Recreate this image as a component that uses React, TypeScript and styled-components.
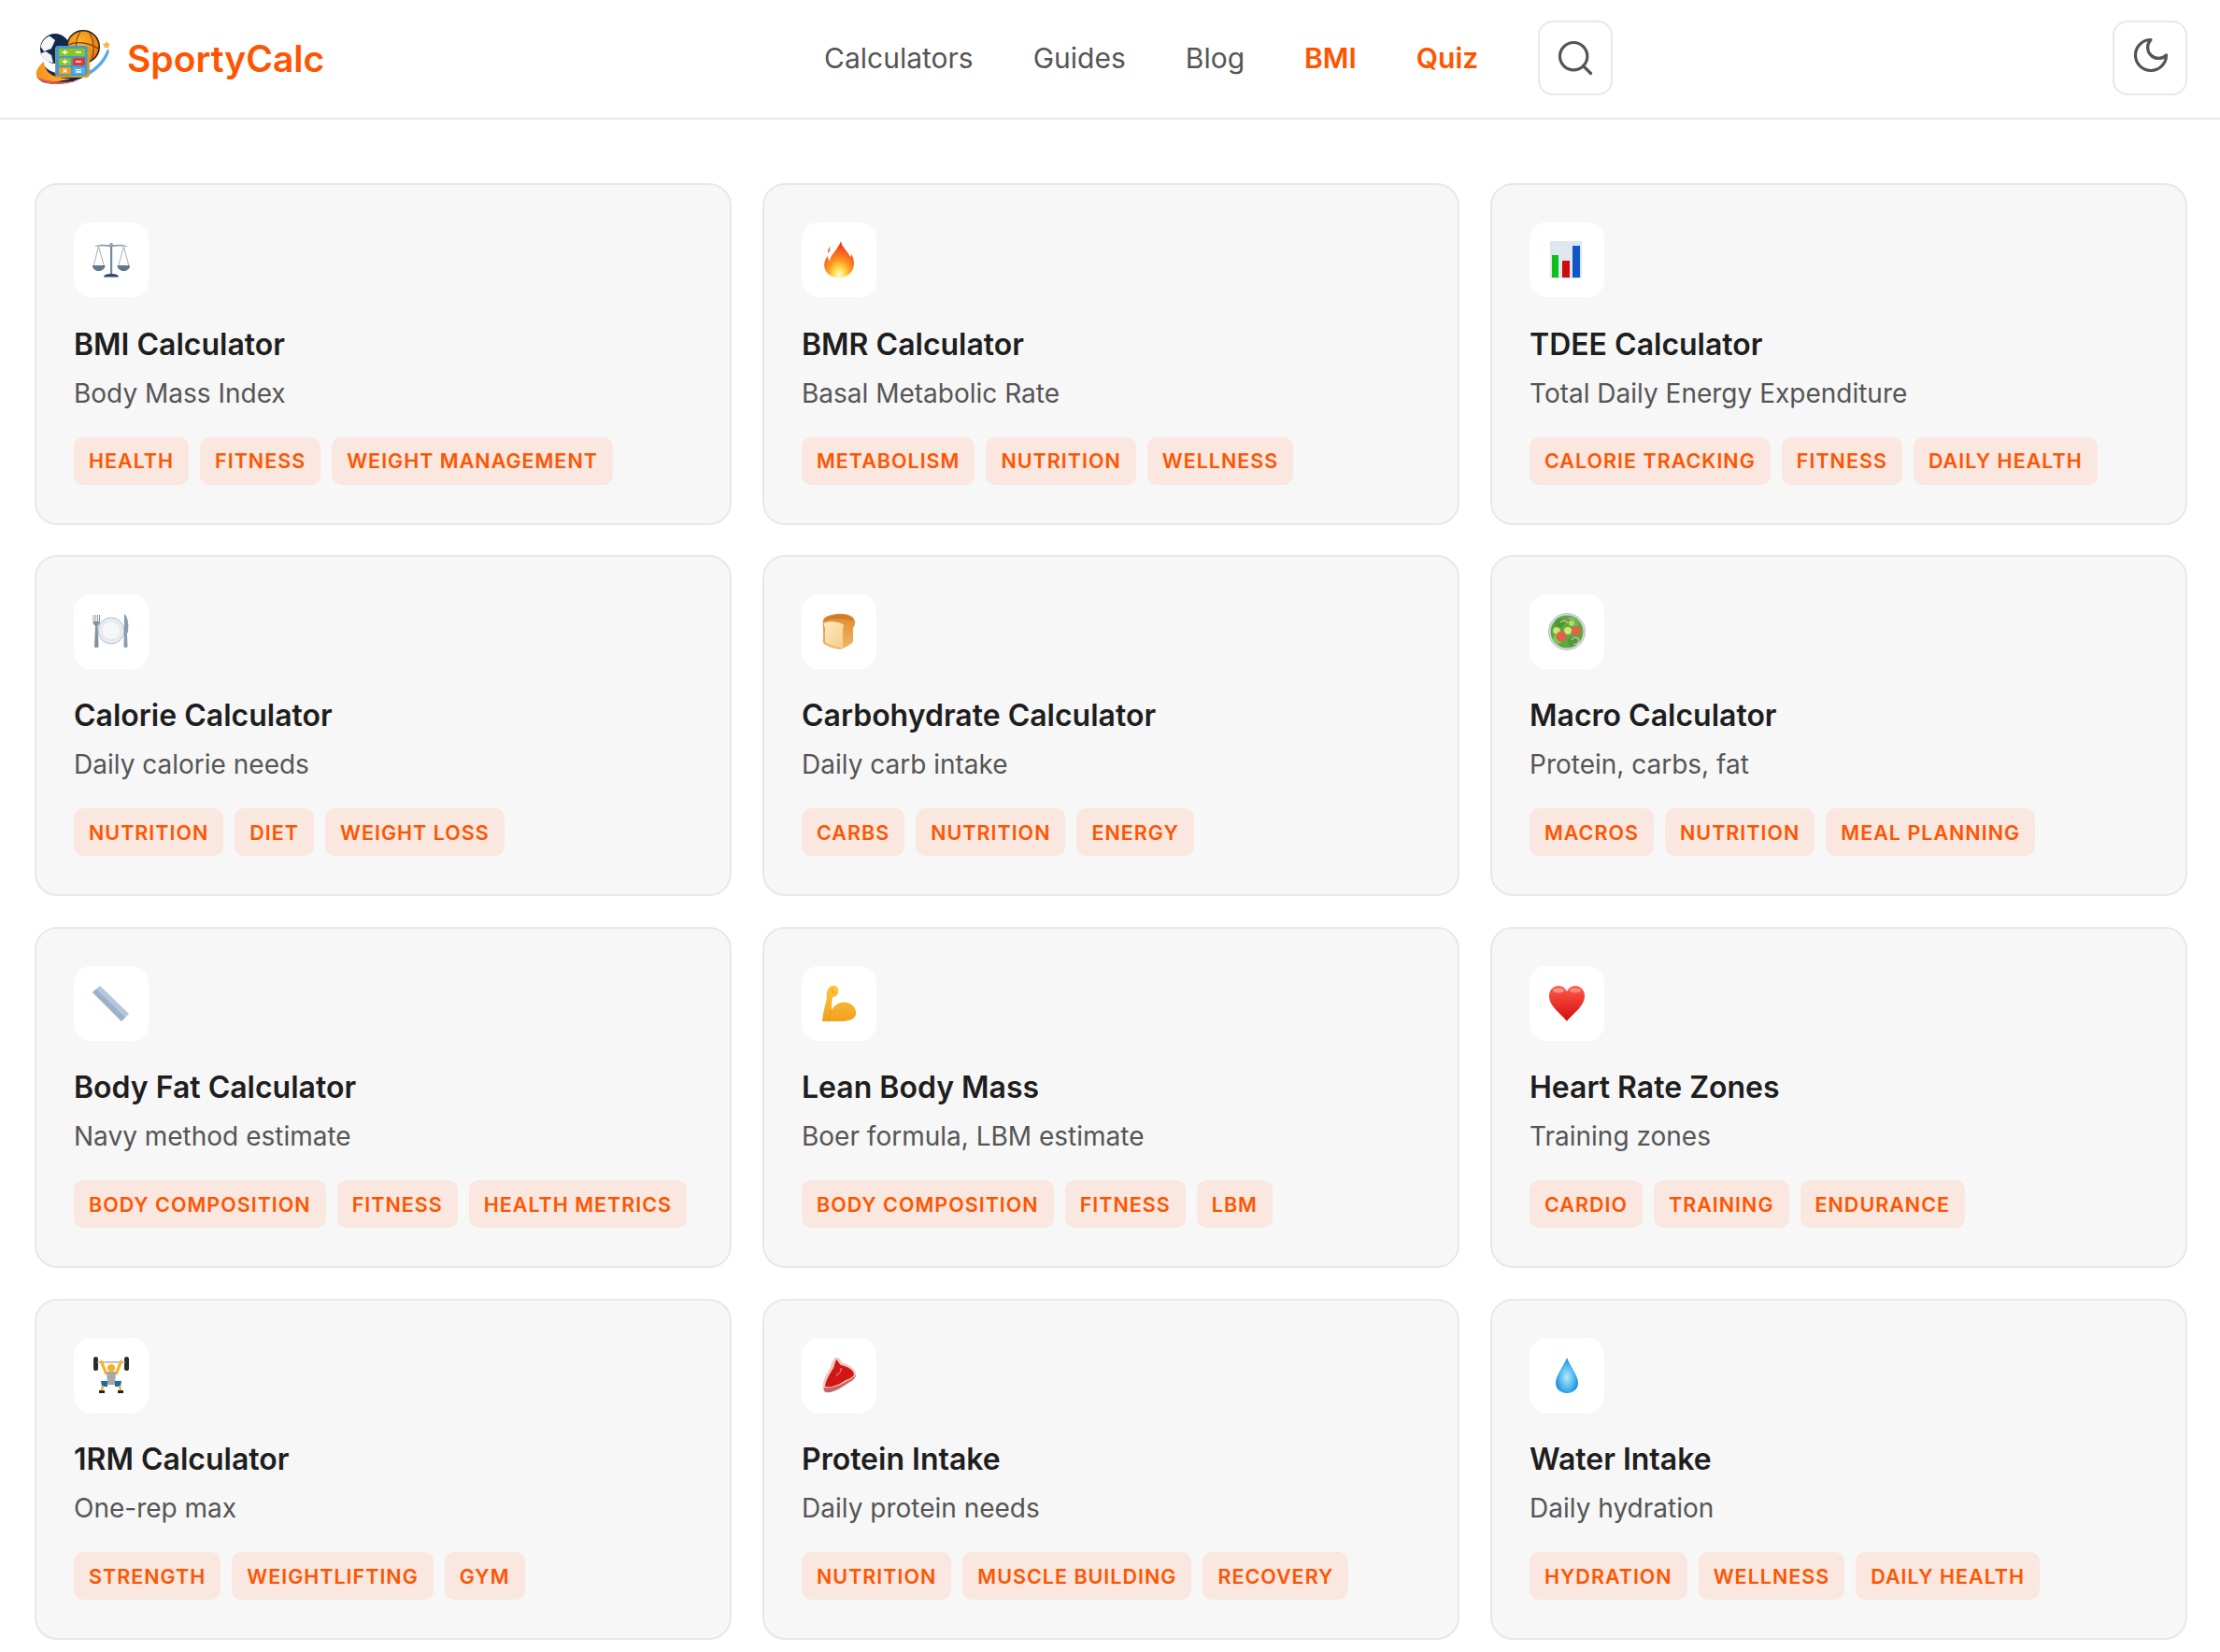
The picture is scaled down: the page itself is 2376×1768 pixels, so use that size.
import React from 'react'
import styled, { createGlobalStyle } from 'styled-components'
import { Search } from 'lucide-react'

const GlobalStyle = createGlobalStyle`
  * { box-sizing: border-box; }
  html, body { margin: 0; padding: 0; background: #fff; }
  body { font-family: Inter, "Noto Sans", sans-serif; color: #1e1e1e; }
`

const Logo = () => (
  <LogoSvg viewBox="0 0 80 60">
    <defs>
      <radialGradient id="ball" cx="40%" cy="35%" r="70%">
        <stop offset="0" stopColor="#ffb52e" />
        <stop offset="1" stopColor="#ea7a0c" />
      </radialGradient>
      <linearGradient id="swoosh" x1="0" y1="0" x2="1" y2="0">
        <stop offset="0" stopColor="#f7931e" />
        <stop offset="1" stopColor="#f9b233" />
      </linearGradient>
    </defs>
    <path d="M8 36 C0 44 -1 52 8 56 C24 61 54 56 70 36 C64 42 58 44 50 46 C34 50 14 48 8 36Z" fill="#14284a" />
    <path d="M9 34 C0 41 -2 50 5 54 C16 58 30 54 38 52 C26 52 10 50 9 34Z" fill="url(#swoosh)" />
    <path d="M1 50 C8 60 30 60 46 54 C30 57 12 56 1 50Z" fill="#e4574c" />
    <path d="M58 44 C68 37 74 29 77 20 L79 23 C76 33 68 42 58 48Z" fill="#5aa9e6" />
    <path d="M76 12 l1.400 2.400 2.600.6-1.800 2 .3 2.700-2.500-1.100-2.500 1.100.3-2.700-1.800-2 2.600-.6z" fill="#f6b23a" />
    <circle cx="21" cy="20" r="16" fill="#14284a" />
    <path d="M5.500 18 C7 12 11 8 15 6.500 L21 11 L17 20 L9 23Z" fill="#f5f6f8" />
    <path d="M6 25 L11 23 L17 27 L19 35 C12 35 7 31 6 25Z" fill="#eef1f3" />
    <circle cx="51" cy="18" r="18" fill="#1f1a17" />
    <circle cx="51" cy="18" r="16.500" fill="url(#ball)" />
    <path d="M35 16 C44 12 56 13 67 20 M48 2 C42 10 42 24 46 34 M58 3 C62 10 64 20 60 33" fill="none" stroke="#7a3a0a" strokeWidth="1.100" />
    <rect x="21" y="17" width="37" height="34" rx="4" fill="#d99a25" />
    <rect x="21.500" y="17" width="34" height="32" rx="3" fill="#3f9bd6" />
    <rect x="25" y="20" width="28" height="8" rx="1" fill="#8fc31f" />
    <rect x="25" y="30" width="13" height="8" rx="1" fill="#8fc31f" />
    <rect x="40" y="30" width="13" height="8" rx="1" fill="#e8342e" />
    <rect x="25" y="40" width="13" height="7.500" rx="1" fill="#f39c23" />
    <rect x="40" y="40" width="13" height="7.500" rx="1" fill="#57aee6" />
    <path d="M28.500 24h6M31.500 21.500v5M43 24h6M28.500 34h6M31.500 31.500v5M43 34h6M29.500 42l4 3.500M33.500 42l-4 3.500M43 42.600h6M43 45h6" stroke="#fff" strokeWidth="1.300" />
  </LogoSvg>
)

const Scale = () => (
  <svg viewBox="0 0 40 40">
    <path d="M19 2h2.200v33H19z" fill="#6f8aa3" />
    <path d="M3 5 C10 3 15 4 20 4 C25 4 30 3 37 5 L37 6 C30 5 25 6 20 6 C15 6 10 5 3 6Z" fill="#8c9db0" />
    <path d="M6.500 6 L1 27 M6.500 6 L12.500 27 M33.500 6 L27.500 27 M33.500 6 L39 27" stroke="#8d99a5" strokeWidth="0.800" fill="none" />
    <path d="M0 26 H13.500 C13.500 30 9.500 32 6.500 32 C3.500 32 0 30 0 26Z" fill="#63778c" />
    <path d="M26.500 26 H40 C40 30 36.500 32 33.500 32 C30.500 32 26.500 30 26.500 26Z" fill="#63778c" />
    <path d="M12 38.500 C12 35.500 17 35 20 35 C23 35 28 35.500 28 38.500Z" fill="#34495e" />
    <circle cx="20" cy="3.500" r="1.600" fill="#8fa3b5" />
  </svg>
)

const Fire = () => (
  <svg viewBox="0 0 40 40">
    <defs>
      <radialGradient id="flame" cx="50%" cy="92%" r="85%">
        <stop offset="0" stopColor="#fffbe0" />
        <stop offset="0.2" stopColor="#ffe14d" />
        <stop offset="0.5" stopColor="#ff8f1f" />
        <stop offset="1" stopColor="#ee3418" />
      </radialGradient>
    </defs>
    <path d="M22 0 C23 7 29 10 32 17 C33 15 33 14 33 14 C37 20 37 28 33 33 C30 37 25 39 20 39 C13 39 7 36 5 30 C3 25 5 19 8 16 C8 19 9 20 10 21 C11 14 19 9 22 0Z" fill="url(#flame)" />
    <path d="M8 10 C9 8 10 7 10 5 C11 8 10 12 8 13Z" fill="#f4603a" />
  </svg>
)

const Chart = () => (
  <svg viewBox="0 0 40 40">
    <rect x="2" width="34" height="40" fill="#dfe6ef" />
    <rect x="4" y="15" width="7" height="24" fill="#0fbf1a" />
    <rect x="15" y="21" width="8" height="18" fill="#cf0a0a" />
    <rect x="26" y="5" width="8" height="34" fill="#0f57c9" />
  </svg>
)

const Plate = () => (
  <svg viewBox="0 0 40 40">
    <circle cx="20" cy="19" r="14" fill="#e8ecef" stroke="#a9b0b6" strokeWidth="0.800" />
    <circle cx="20" cy="19" r="10" fill="#f6f7f8" stroke="#d7dbdf" strokeWidth="0.600" />
    <path d="M0.500 2v8c0 2 2 3 2.500 4 L2 36 c0 1.500 4.500 1.500 4.500 0 L5.500 14 c.5-1 2.500-2 2.500-4 V2 h-1 v7 h-1.200 V2 h-1 v7 h-1.300 V2 h-1 v7 h-1.200 V2z" fill="#8093a5" />
    <path d="M34 1 C38 4 39 12 38 20 L37 22 L37.500 36 c0 1.500-4 1.500-4 0 Z" fill="#8a9dae" />
  </svg>
)

const Bread = () => (
  <svg viewBox="0 0 40 40">
    <defs>
      <linearGradient id="crumb" x1="0" y1="0" x2="1" y2="1">
        <stop offset="0" stopColor="#fdebc2" />
        <stop offset="1" stopColor="#f5cd8a" />
      </linearGradient>
      <linearGradient id="crust" x1="0" y1="0" x2="0" y2="1">
        <stop offset="0" stopColor="#e08a2c" />
        <stop offset="1" stopColor="#efb768" />
      </linearGradient>
    </defs>
    <path d="M3 10 C2 5 8 2 18 1 C28 0 36 3 37 9 C38 13 35 15 35 17 L35 30 C35 33 25 38 21 39 C17 39 5 35 3 32 L3 16 C2 14 3 12 3 10Z" fill="url(#crust)" />
    <path d="M4 11 C8 8 20 9 24 12 C26 14 24 16 24 18 L24 37 C20 38 8 34 5 31 L5 16 C4 14 3 13 4 11Z" fill="url(#crumb)" />
    <path d="M3 9 C4 4 12 2 20 2 C28 2 35 4 36 9 C30 6 14 5 3 9Z" fill="#c9701e" opacity="0.600" />
  </svg>
)

const Salad = () => (
  <svg viewBox="0 0 40 40">
    <circle cx="20" cy="20" r="19.500" fill="#d8dfe4" stroke="#a6b1ba" strokeWidth="0.800" />
    <circle cx="20" cy="20" r="17.500" fill="#5fa83f" />
    <circle cx="12" cy="11" r="5" fill="#4d9635" />
    <circle cx="28" cy="10" r="5" fill="#6bb84a" />
    <circle cx="10" cy="28" r="5" fill="#80c656" />
    <circle cx="26" cy="31" r="5" fill="#4f9a38" />
    <circle cx="9" cy="19" r="3.800" fill="#cfe676" />
    <circle cx="21" cy="19" r="4" fill="#cfe676" />
    <circle cx="25" cy="11" r="3" fill="#b4da64" />
    <circle cx="14" cy="25" r="5.500" fill="#e2604c" />
    <circle cx="30" cy="19" r="5" fill="#e2604c" />
    <path d="M13 10 C16 7 20 8 21 11 M22 6 C24 5 26 6 27 7 M25 29 C27 25 32 26 33 29 C33 33 29 34 27 33" fill="none" stroke="#e8b8c8" strokeWidth="1.100" />
  </svg>
)

const Ruler = () => (
  <svg viewBox="0 0 40 40">
    <path d="M8 1 L0 8 L31 39 L39 31Z" fill="#b3c6dc" />
    <path d="M0 8 L31 39 L35 35 L4 4.500Z" fill="#9cb0c6" />
  </svg>
)

const Muscle = () => (
  <svg viewBox="0 0 40 40">
    <defs>
      <linearGradient id="arm" x1="0" y1="0" x2="0" y2="1">
        <stop offset="0" stopColor="#ffc83d" />
        <stop offset="1" stopColor="#f2a01e" />
      </linearGradient>
    </defs>
    <path d="M2 38 C3 30 5 22 7 14 C6 10 7 7 8 5 C9 2 13 0 16 1 C19 2 20 6 19 9 C18 12 15 13 13 13 C12 19 12 23 12 27 C15 21 22 17 29 19 C36 21 39 27 38 32 C36 38 28 39 22 39 L2 39Z" fill="url(#arm)" />
    <path d="M12 4 C13 6 13 8 14 9" stroke="#d98a14" strokeWidth="1" fill="none" />
    <path d="M12 27 C10 31 9 34 9 38" stroke="#e0940f" strokeWidth="0.800" fill="none" />
  </svg>
)

const Heart = () => (
  <svg viewBox="0 0 40 40">
    <defs>
      <linearGradient id="heart" x1="0" y1="0" x2="0" y2="1">
        <stop offset="0" stopColor="#ff5a4a" />
        <stop offset="1" stopColor="#d40d0d" />
      </linearGradient>
    </defs>
    <path d="M20 39 C14 31 1 23 1 12 C1 5 6 1 11 1 C15 1 18 3 20 7 C22 3 25 1 29 1 C34 1 39 5 39 12 C39 23 26 31 20 39Z" fill="url(#heart)" />
    <ellipse cx="11" cy="6" rx="6" ry="2.500" fill="#ffb3a8" opacity="0.700" />
    <ellipse cx="29" cy="6" rx="6" ry="2.500" fill="#ffb3a8" opacity="0.600" />
  </svg>
)

const Lifter = () => (
  <svg viewBox="0 0 40 40">
    <rect x="1" y="0" width="5" height="15" rx="2.500" fill="#2b2b2b" />
    <rect x="34" y="0" width="5" height="15" rx="2.500" fill="#2b2b2b" />
    <rect x="5" y="5" width="30" height="1.600" fill="#a9b3bb" />
    <path d="M9 4 L15 19 M31 4 L25 19" stroke="#f5b324" strokeWidth="3.200" />
    <circle cx="20" cy="12" r="4" fill="#f5b324" />
    <path d="M15 16h10l-1 14h-8z" fill="#a7a7aa" />
    <path d="M9 26 h7 v6 H10 Z M24 26 h7 l-1 6 h-6z" fill="#2269a8" />
    <path d="M11 31 L10 36 M29 31 L30 36" stroke="#f5b324" strokeWidth="2.600" />
    <path d="M7 36h6v3H7zM27 36h6v3h-6z" fill="#23272b" />
  </svg>
)

const Meat = () => (
  <svg viewBox="0 0 40 40">
    <path d="M16 1 C19 0 22 3 23 6 C30 8 38 13 38 19 C37 25 30 27 26 30 C20 34 12 38 7 38 C3 38 2 34 3 28 C5 20 9 15 11 10 C12 6 14 3 16 1Z" fill="#f3c6bf" />
    <path d="M17 3 C19 4 20 8 22 9 C28 10 36 14 36 19 C35 23 28 24 24 27 C18 31 11 33 5 32 C6 24 11 17 14 12 C15 9 16 6 17 3Z" fill="#cf1714" />
    <path d="M4 33 C11 34 20 31 25 28 C30 25 36 23 38 19 C38 25 31 27 27 30 C21 34 13 39 7 38 C5 38 3 36 4 33Z" fill="#c4676a" />
    <path d="M22 12 C23 15 20 18 17 20" stroke="#f4b6ae" strokeWidth="1" fill="none" />
  </svg>
)

const Drop = () => (
  <svg viewBox="0 0 40 40">
    <defs>
      <radialGradient id="drop" cx="50%" cy="55%" r="55%">
        <stop offset="0" stopColor="#b9e8fb" />
        <stop offset="0.550" stopColor="#55bcf0" />
        <stop offset="1" stopColor="#1487d8" />
      </radialGradient>
    </defs>
    <path d="M20 1 C23 9 32 20 32 28 C32 35 26 39 20 39 C14 39 8 35 8 28 C8 20 17 9 20 1Z" fill="url(#drop)" />
  </svg>
)

const calculators = [
  { Icon: Scale, title: 'BMI Calculator', text: 'Body Mass Index', tags: ['Health', 'Fitness', 'Weight Management'] },
  { Icon: Fire, title: 'BMR Calculator', text: 'Basal Metabolic Rate', tags: ['Metabolism', 'Nutrition', 'Wellness'] },
  { Icon: Chart, title: 'TDEE Calculator', text: 'Total Daily Energy Expenditure', tags: ['Calorie Tracking', 'Fitness', 'Daily Health'] },
  { Icon: Plate, title: 'Calorie Calculator', text: 'Daily calorie needs', tags: ['Nutrition', 'Diet', 'Weight Loss'] },
  { Icon: Bread, title: 'Carbohydrate Calculator', text: 'Daily carb intake', tags: ['Carbs', 'Nutrition', 'Energy'] },
  { Icon: Salad, title: 'Macro Calculator', text: 'Protein, carbs, fat', tags: ['Macros', 'Nutrition', 'Meal Planning'] },
  { Icon: Ruler, title: 'Body Fat Calculator', text: 'Navy method estimate', tags: ['Body Composition', 'Fitness', 'Health Metrics'] },
  { Icon: Muscle, title: 'Lean Body Mass', text: 'Boer formula, LBM estimate', tags: ['Body Composition', 'Fitness', 'LBM'] },
  { Icon: Heart, title: 'Heart Rate Zones', text: 'Training zones', tags: ['Cardio', 'Training', 'Endurance'] },
  { Icon: Lifter, title: '1RM Calculator', text: 'One-rep max', tags: ['Strength', 'Weightlifting', 'Gym'] },
  { Icon: Meat, title: 'Protein Intake', text: 'Daily protein needs', tags: ['Nutrition', 'Muscle Building', 'Recovery'] },
  { Icon: Drop, title: 'Water Intake', text: 'Daily hydration', tags: ['Hydration', 'Wellness', 'Daily Health'] },
]

const App: React.FC = () => (
  <>
    <GlobalStyle />
    <Header>
      <Brand>
        <Logo />
        <BrandName>SportyCalc</BrandName>
      </Brand>
      <Nav>
        <NavLink>Calculators</NavLink>
        <NavLink>Guides</NavLink>
        <NavLink>Blog</NavLink>
        <NavLink $accent>BMI</NavLink>
        <NavLink $accent>Quiz</NavLink>
        <IconButton><Search size={44} strokeWidth={1.75} /></IconButton>
      </Nav>
      <IconButton>
        <MoonIcon viewBox="0 0 24 24">
          <path d="M12 3a6 6 0 0 0 9 9 9 9 0 1 1-9-9Z" />
        </MoonIcon>
      </IconButton>
    </Header>
    <Grid>
      {calculators.map(({ Icon, title, text, tags }) => (
        <Card key={title}>
          <EmojiBox><Icon /></EmojiBox>
          <Title>{title}</Title>
          <Subtitle>{text}</Subtitle>
          <Tags>
            {tags.map(tag => <Tag key={tag}>{tag}</Tag>)}
          </Tags>
        </Card>
      ))}
    </Grid>
  </>
)

const Header = styled.header`
  height: 128px;
  padding: 0 35px 2px 38px;
  display: flex;
  align-items: center;
  justify-content: space-between;
  border-bottom: 2px solid #e8e8e8;
  background: #fff;
`

const Brand = styled.div`
  display: flex;
  align-items: center;
  gap: 18px;
`

const LogoSvg = styled.svg`
  width: 80px;
  height: 60px;
  display: block;
`

const BrandName = styled.span`
  font-size: 39px;
  font-weight: 600;
  color: #ff5500;
`

const Nav = styled.nav`
  display: flex;
  align-items: center;
  gap: 64px;
`

const NavLink = styled.a<{ $accent?: boolean }>`
  font-size: 30px;
  font-weight: ${p => (p.$accent ? 600 : 400)};
  color: ${p => (p.$accent ? '#ff5500' : '#555')};
`

const IconButton = styled.button`
  width: 80px;
  height: 80px;
  padding: 0;
  display: flex;
  align-items: center;
  justify-content: center;
  background: #fff;
  border: 2px solid #e8e8e8;
  border-radius: 16px;
  color: #555;
`

const MoonIcon = styled.svg`
  width: 44px;
  height: 44px;
  margin: 0 0 6px 2px;
  fill: none;
  stroke: currentColor;
  stroke-width: 1.75;
  stroke-linecap: round;
  stroke-linejoin: round;
`

const Grid = styled.main`
  display: grid;
  grid-template-columns: repeat(3, 1fr);
  gap: 32.400px 33px;
  padding: 68px 35px 0 37px;
`

const Card = styled.article`
  display: flex;
  flex-direction: column;
  align-items: flex-start;
  padding: 40px 40px 41px;
  background: #f7f7f7;
  border: 2px solid #e8e8e8;
  border-radius: 24px;
`

const EmojiBox = styled.div`
  width: 80px;
  height: 80px;
  display: flex;
  align-items: center;
  justify-content: center;
  background: #fff;
  border-radius: 18px;

  svg {
    width: 40px;
    height: 40px;
    display: block;
  }
`

const Title = styled.h3`
  margin: 28.500px 0 0;
  font-size: 32px;
  line-height: 44px;
  font-weight: 600;
  color: #1e1e1e;
`

const Subtitle = styled.p`
  margin: 8px 0 0;
  font-size: 28px;
  line-height: 44px;
  color: #555;
`

const Tags = styled.div`
  display: flex;
  gap: 12px;
  margin-top: 25px;
`

const Tag = styled.span`
  height: 51px;
  padding: 0 16px;
  display: flex;
  align-items: center;
  white-space: nowrap;
  font-size: 21.500px;
  font-weight: 600;
  letter-spacing: 1px;
  text-transform: uppercase;
  color: #ff5500;
  background: #fae7e0;
  border-radius: 10px;
`

export default App
